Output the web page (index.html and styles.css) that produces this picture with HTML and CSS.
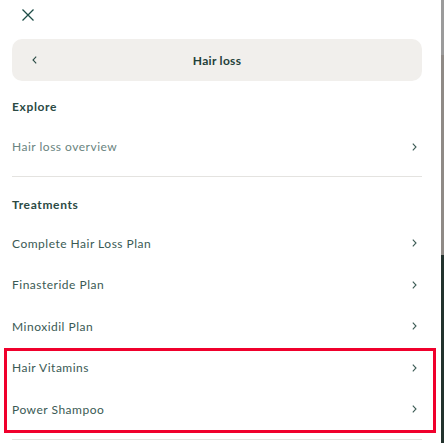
FILE: index.html
```html
<!DOCTYPE html>
<html>
<head>
<meta charset="utf-8">
<link rel="stylesheet" href="styles.css">
</head>
<body>
<div class="screen">
  <div class="panel">
    <div class="topbar">
      <svg class="close" width="12" height="12" viewBox="0 0 12 12"><path d="M0.5 0.5 L11.5 11.5 M11.5 0.5 L0.5 11.5" stroke="#1e4d47" stroke-width="1.3" fill="none"/></svg>
    </div>
    <div class="header">
      <svg class="back" width="5" height="8" viewBox="0 0 5 8"><path d="M4.2 0.6 L1 4 L4.2 7.4" stroke="#2b4c46" stroke-width="1.1" fill="none"/></svg>
      <span class="title">Hair loss</span>
    </div>
    <div class="heading first">Explore</div>
    <div class="row light"><span>Hair loss overview</span><svg class="chev" width="5" height="8" viewBox="0 0 5 8"><path d="M0.8 0.6 L4 4 L0.8 7.4" stroke="#3d5c56" stroke-width="1.1" fill="none"/></svg></div>
    <div class="divider top-div"></div>
    <div class="heading second">Treatments</div>
    <div class="row"><span>Complete Hair Loss Plan</span><svg class="chev" width="5" height="8" viewBox="0 0 5 8"><path d="M0.8 0.6 L4 4 L0.8 7.4" stroke="#3d5c56" stroke-width="1.1" fill="none"/></svg></div>
    <div class="row"><span>Finasteride Plan</span><svg class="chev" width="5" height="8" viewBox="0 0 5 8"><path d="M0.8 0.6 L4 4 L0.8 7.4" stroke="#3d5c56" stroke-width="1.1" fill="none"/></svg></div>
    <div class="row"><span>Minoxidil Plan</span><svg class="chev" width="5" height="8" viewBox="0 0 5 8"><path d="M0.8 0.6 L4 4 L0.8 7.4" stroke="#3d5c56" stroke-width="1.1" fill="none"/></svg></div>
    <div class="group">
      <div class="row"><span>Hair Vitamins</span><svg class="chev" width="5" height="8" viewBox="0 0 5 8"><path d="M0.8 0.6 L4 4 L0.8 7.4" stroke="#3d5c56" stroke-width="1.1" fill="none"/></svg></div>
      <div class="row"><span>Power Shampoo</span><svg class="chev" width="5" height="8" viewBox="0 0 5 8"><path d="M0.8 0.6 L4 4 L0.8 7.4" stroke="#3d5c56" stroke-width="1.1" fill="none"/></svg></div>
    </div>
    <div class="divider bottom-div"></div>
  </div>
  <div class="strip">
    <div class="s1"></div>
    <div class="s2"></div>
    <div class="s3"></div>
  </div>
</div>
</body>
</html>
```
FILE: styles.css
```css
html, body {
  margin: 0;
  padding: 0;
  background: #ffffff;
}
body {
  font-family: "Lato", "Open Sans", sans-serif;
  color: #2f4d47;
  overflow: hidden;
}
.screen {
  display: flex;
  width: 444px;
  height: 443px;
  overflow: hidden;
}
.panel {
  width: 441px;
  flex: none;
  box-sizing: border-box;
  padding: 0 19px 0 12px;
  background: #fff;
}
.topbar {
  height: 39px;
  box-sizing: border-box;
  padding-top: 9px;
  padding-left: 10px;
}
.close {
  display: block;
}
.header {
  height: 42px;
  background: #f1efec;
  border-radius: 10px;
  display: flex;
  align-items: center;
  justify-content: center;
  position: relative;
}
.back {
  position: absolute;
  left: 20px;
  top: 17px;
}
.title {
  font-size: 12px;
  font-weight: 700;
  letter-spacing: 0.3px;
  color: #1f3f39;
}
.heading {
  font-size: 12px;
  font-weight: 700;
  letter-spacing: 0.65px;
  color: #2b4a44;
  height: 20px;
  line-height: 20px;
}
.heading.first {
  margin-top: 16px;
}
.heading.second {
  margin-top: 18px;
}
.row {
  height: 41.5px;
  display: flex;
  align-items: center;
  justify-content: space-between;
  font-size: 12px;
  letter-spacing: 0.5px;
  color: #3a5a54;
}
.row.light {
  color: #6a8480;
  margin-top: 9px;
}
.heading.second + .row {
  margin-top: 8px;
}
.chev {
  margin-right: 5px;
  flex: none;
}
.divider {
  height: 1px;
  background: #e4e3e0;
}
.top-div {
  margin-top: 8px;
}
.bottom-div {
  margin-top: 9px;
}
.group {
  position: relative;
}
.group::after {
  content: "";
  position: absolute;
  top: 1px;
  bottom: -3px;
  left: -8px;
  right: -14px;
  border: 3px solid #f0002c;
  pointer-events: none;
}
.strip {
  width: 3px;
  flex: none;
  display: flex;
  flex-direction: column;
}
.s1 {
  height: 55px;
  background: #9b9b9b;
}
.s2 {
  height: 200px;
  background: #8f8a86;
}
.s3 {
  flex: 1;
  background: #22322d;
}
```
